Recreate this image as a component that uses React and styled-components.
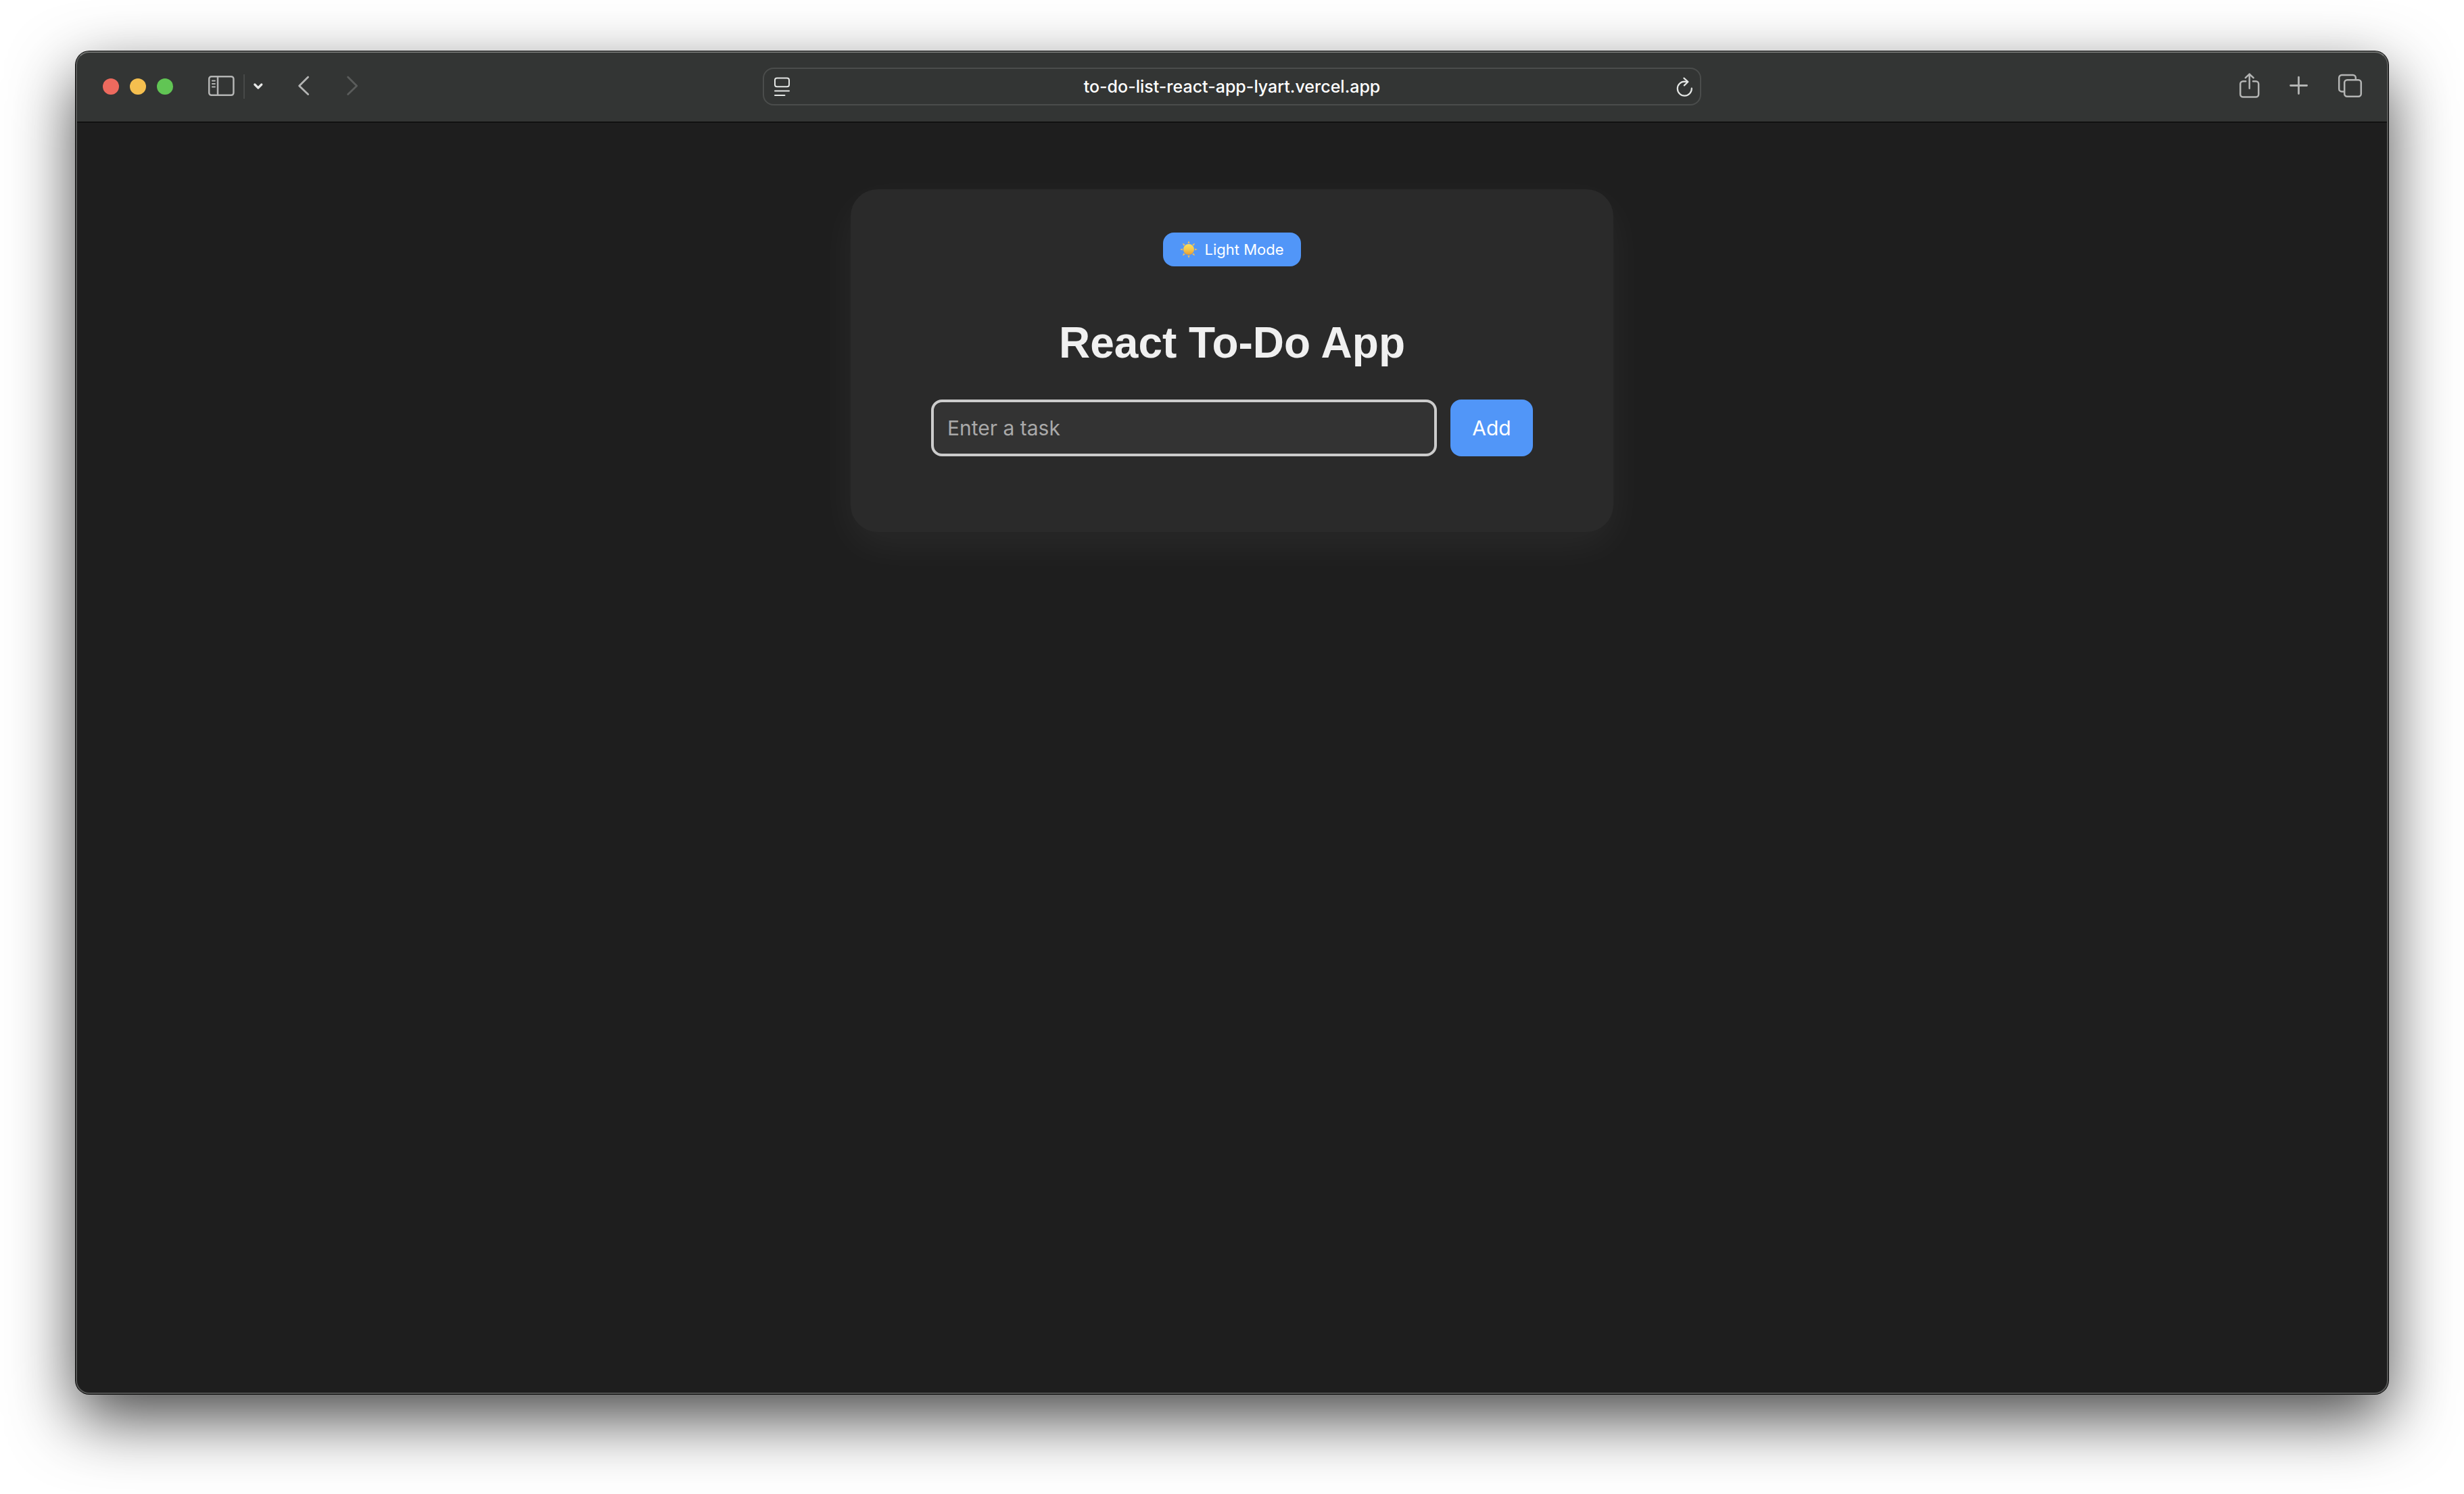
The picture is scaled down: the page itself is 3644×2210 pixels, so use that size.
import React, { useState } from 'react';
import styled, { createGlobalStyle } from 'styled-components';

const GlobalStyle = createGlobalStyle`
  *, *::before, *::after { box-sizing: border-box; }
  body {
    margin: 0;
    background: #ffffff;
    font-family: Inter, "Liberation Sans", sans-serif;
  }
  button, input { font: inherit; color: inherit; }
`;

const Desktop = styled.div`
  display: flex;
  min-height: 100vh;
  padding: 76px 112px 148px;
`;

const Window = styled.div`
  position: relative;
  flex: 1;
  min-width: 0;
  display: flex;
  flex-direction: column;
  border-radius: 20px;
  background: #1e1e1e;
  box-shadow: 0 0 0 1px #000000, 0 36px 96px rgba(0, 0, 0, 0.72);

  &::after {
    content: "";
    position: absolute;
    inset: 0;
    border: 2px solid #555655;
    border-top-color: #737573;
    border-radius: inherit;
    pointer-events: none;
  }
`;

const Toolbar = styled.header`
  display: grid;
  grid-template-columns: minmax(0, 1fr) minmax(0, 1388px) minmax(0, 1fr);
  align-items: center;
  height: 104px;
  padding: 0 40px;
  border-radius: 20px 20px 0 0;
  background: #333534;
  box-shadow: 0 1px 0 #000000;
`;

const Group = styled.div`
  display: flex;
  align-items: center;
  gap: ${({ $gap }) => $gap}px;
  justify-content: ${({ $end }) => ($end ? 'flex-end' : 'flex-start')};
`;

const Light = styled.button`
  width: 24px;
  height: 24px;
  padding: 0;
  border: 0;
  border-radius: 50%;
  background: ${({ $color }) => $color};
`;

const IconButton = styled.button`
  display: flex;
  padding: 0;
  border: 0;
  background: none;
  color: ${({ $color }) => $color || '#b4b5b4'};

  svg { display: block; overflow: visible; }
`;

const Divider = styled.span`
  width: 2px;
  height: 36px;
  background: #474948;
`;

const AddressBar = styled.div`
  display: flex;
  align-items: center;
  height: 56px;
  padding: 0 10px;
  border: 2px solid #4b4d4c;
  border-radius: 16px;
`;

const AddressInput = styled.input`
  flex: 1;
  min-width: 0;
  padding: 0;
  border: 0;
  outline: 0;
  background: none;
  color: #ffffff;
  font-size: 25px;
  font-weight: 500;
  line-height: 32px;
  text-align: center;
`;

const Page = styled.main`
  flex: 1;
  padding: 100px 40px;
`;

const Card = styled.section`
  display: flex;
  flex-direction: column;
  align-items: center;
  max-width: 1128px;
  margin: 0 auto;
  padding: 64px 64px 112px;
  border-radius: 40px;
  background: #2a2a2a;
  box-shadow: 0 20px 60px rgba(255, 255, 255, 0.05);
`;

const ThemeButton = styled.button`
  display: flex;
  align-items: center;
  justify-content: center;
  gap: 10px;
  min-width: 204px;
  height: 50px;
  padding: 0 24px;
  border: 0;
  border-radius: 16px;
  background: #5196f8;
  color: #ffffff;
  font-size: 22px;
  line-height: 28px;
`;

const Title = styled.h1`
  margin: 77px 0 48px;
  color: #f0f0f0;
  font-family: "Liberation Sans", Helvetica, Arial, sans-serif;
  font-size: 64px;
  font-weight: 700;
  line-height: 72px;
`;

const TaskForm = styled.form`
  display: flex;
  gap: 20px;
  width: 100%;
  max-width: 890px;
`;

const TaskInput = styled.input`
  flex: 1;
  min-width: 0;
  height: 84px;
  padding: 0 20px;
  border: 4px solid #cccccc;
  border-radius: 16px;
  outline: 0;
  background: #333333;
  color: #f0f0f0;
  font-size: 30px;

  &::placeholder { color: #a9a9a9; opacity: 1; }
`;

const AddButton = styled.button`
  min-width: 122px;
  height: 84px;
  padding: 0 32px;
  border: 0;
  border-radius: 16px;
  background: #5196f8;
  color: #ffffff;
  font-size: 30px;
`;

function Icon({ width, stroke = 2.5, children }) {
  return (
    <svg
      width={width}
      height="40"
      viewBox={`0 0 ${width} 40`}
      fill="none"
      stroke="currentColor"
      strokeWidth={stroke}
      strokeLinecap="round"
      strokeLinejoin="round"
      aria-hidden="true"
    >
      {children}
    </svg>
  );
}

function Sun() {
  return (
    <svg width="26" height="26" viewBox="0 0 26 26" aria-hidden="true">
      <defs>
        <linearGradient id="sun" x1="0" y1="0" x2="0" y2="1">
          <stop offset="0" stopColor="#fbe05c" />
          <stop offset="0.5" stopColor="#f5c84c" />
          <stop offset="1" stopColor="#e59c35" />
        </linearGradient>
      </defs>
      {[0, 45, 90, 135, 180, 225, 270, 315].map((angle) => (
        <path
          key={angle}
          d="M13 0 L14.6 4 H11.4 Z"
          fill="#e9bd62"
          transform={`rotate(${angle} 13 13)`}
        />
      ))}
      <circle cx="13" cy="13" r="8" fill="url(#sun)" />
    </svg>
  );
}

function BrowserToolbar() {
  return (
    <Toolbar>
      <Group $gap={50}>
        <Group $gap={16}>
          <Light $color="#ed6a5e" aria-label="Close" />
          <Light $color="#f5bf4f" aria-label="Minimize" />
          <Light $color="#61c554" aria-label="Zoom" />
        </Group>
        <Group $gap={12}>
          <IconButton aria-label="Sidebar">
            <Icon width={42}>
              <rect x="3.2" y="5.2" width="36.2" height="27.6" rx="3.5" />
              <path d="M16 5.5 V32.5" />
              <path d="M7.8 11.5 H12 M7.8 16 H12 M7.8 20.5 H12" strokeWidth="1.8" />
            </Icon>
          </IconButton>
          <Divider />
          <IconButton aria-label="Tab groups" $color="#e6e7e6">
            <Icon width={16} stroke={3.2}>
              <path d="M2.8 17 L7.8 22 L12.8 17" />
            </Icon>
          </IconButton>
        </Group>
        <Group $gap={52}>
          <IconButton aria-label="Back">
            <Icon width={20} stroke={2.8}>
              <path d="M15.6 6 L2.6 19 L15.6 31.6" />
            </Icon>
          </IconButton>
          <IconButton aria-label="Forward" $color="#5a5c5b">
            <Icon width={20} stroke={2.8}>
              <path d="M2.6 6 L15.6 19 L2.6 31.6" />
            </Icon>
          </IconButton>
        </Group>
      </Group>

      <AddressBar>
        <IconButton aria-label="Reader" $color="#e4e6e4">
          <Icon width={28} stroke={2}>
            <rect x="6" y="7.4" width="21" height="12.8" rx="3" />
            <path d="M6 26.5 H27 M6 33 H20.5" />
          </Icon>
        </IconButton>
        <AddressInput
          aria-label="Address"
          readOnly
          value="to-do-list-react-app-lyart.vercel.app"
        />
        <IconButton aria-label="Reload" $color="#e4e6e4">
          <Icon width={28} stroke={2.2}>
            <path d="M25.8 22.6 A10.5 10.5 0 1 1 15.3 12.6 L20 13" />
            <path d="M14.4 7.6 L20.4 13 L14.8 18.4" />
          </Icon>
        </IconButton>
      </AddressBar>

      <Group $gap={42} $end>
        <IconButton aria-label="Share">
          <Icon width={32}>
            <path d="M9.2 12.2 H5.2 a4 4 0 0 0 -4 4 V31.6 a4 4 0 0 0 4 4 H24.2 a4 4 0 0 0 4 -4 V16.2 a4 4 0 0 0 -4 -4 H20" />
            <path d="M14.7 1.6 V22.8 M8.8 7.2 L14.7 1.6 L20.6 7.2" />
          </Icon>
        </IconButton>
        <IconButton aria-label="New tab">
          <Icon width={28} stroke={2.8}>
            <path d="M1.5 18.5 H25.6 M13.5 6.2 V30.6" />
          </Icon>
        </IconButton>
        <IconButton aria-label="Show tabs">
          <Icon width={36}>
            <rect x="11.2" y="10.2" width="24.6" height="24.6" rx="4" />
            <path d="M9.6 27.4 H7.2 a4 4 0 0 1 -4 -4 V7 a4 4 0 0 1 4 -4 H23.8 a4 4 0 0 1 4 4 V8.6" />
          </Icon>
        </IconButton>
      </Group>
    </Toolbar>
  );
}

export default function App() {
  const [task, setTask] = useState('');

  return (
    <>
      <GlobalStyle />
      <Desktop>
        <Window>
          <BrowserToolbar />
          <Page>
            <Card>
              <ThemeButton type="button">
                <Sun />
                Light Mode
              </ThemeButton>
              <Title>React To-Do App</Title>
              <TaskForm onSubmit={(event) => event.preventDefault()}>
                <TaskInput
                  aria-label="Task"
                  placeholder="Enter a task"
                  value={task}
                  onChange={(event) => setTask(event.target.value)}
                />
                <AddButton type="submit">Add</AddButton>
              </TaskForm>
            </Card>
          </Page>
        </Window>
      </Desktop>
    </>
  );
}
